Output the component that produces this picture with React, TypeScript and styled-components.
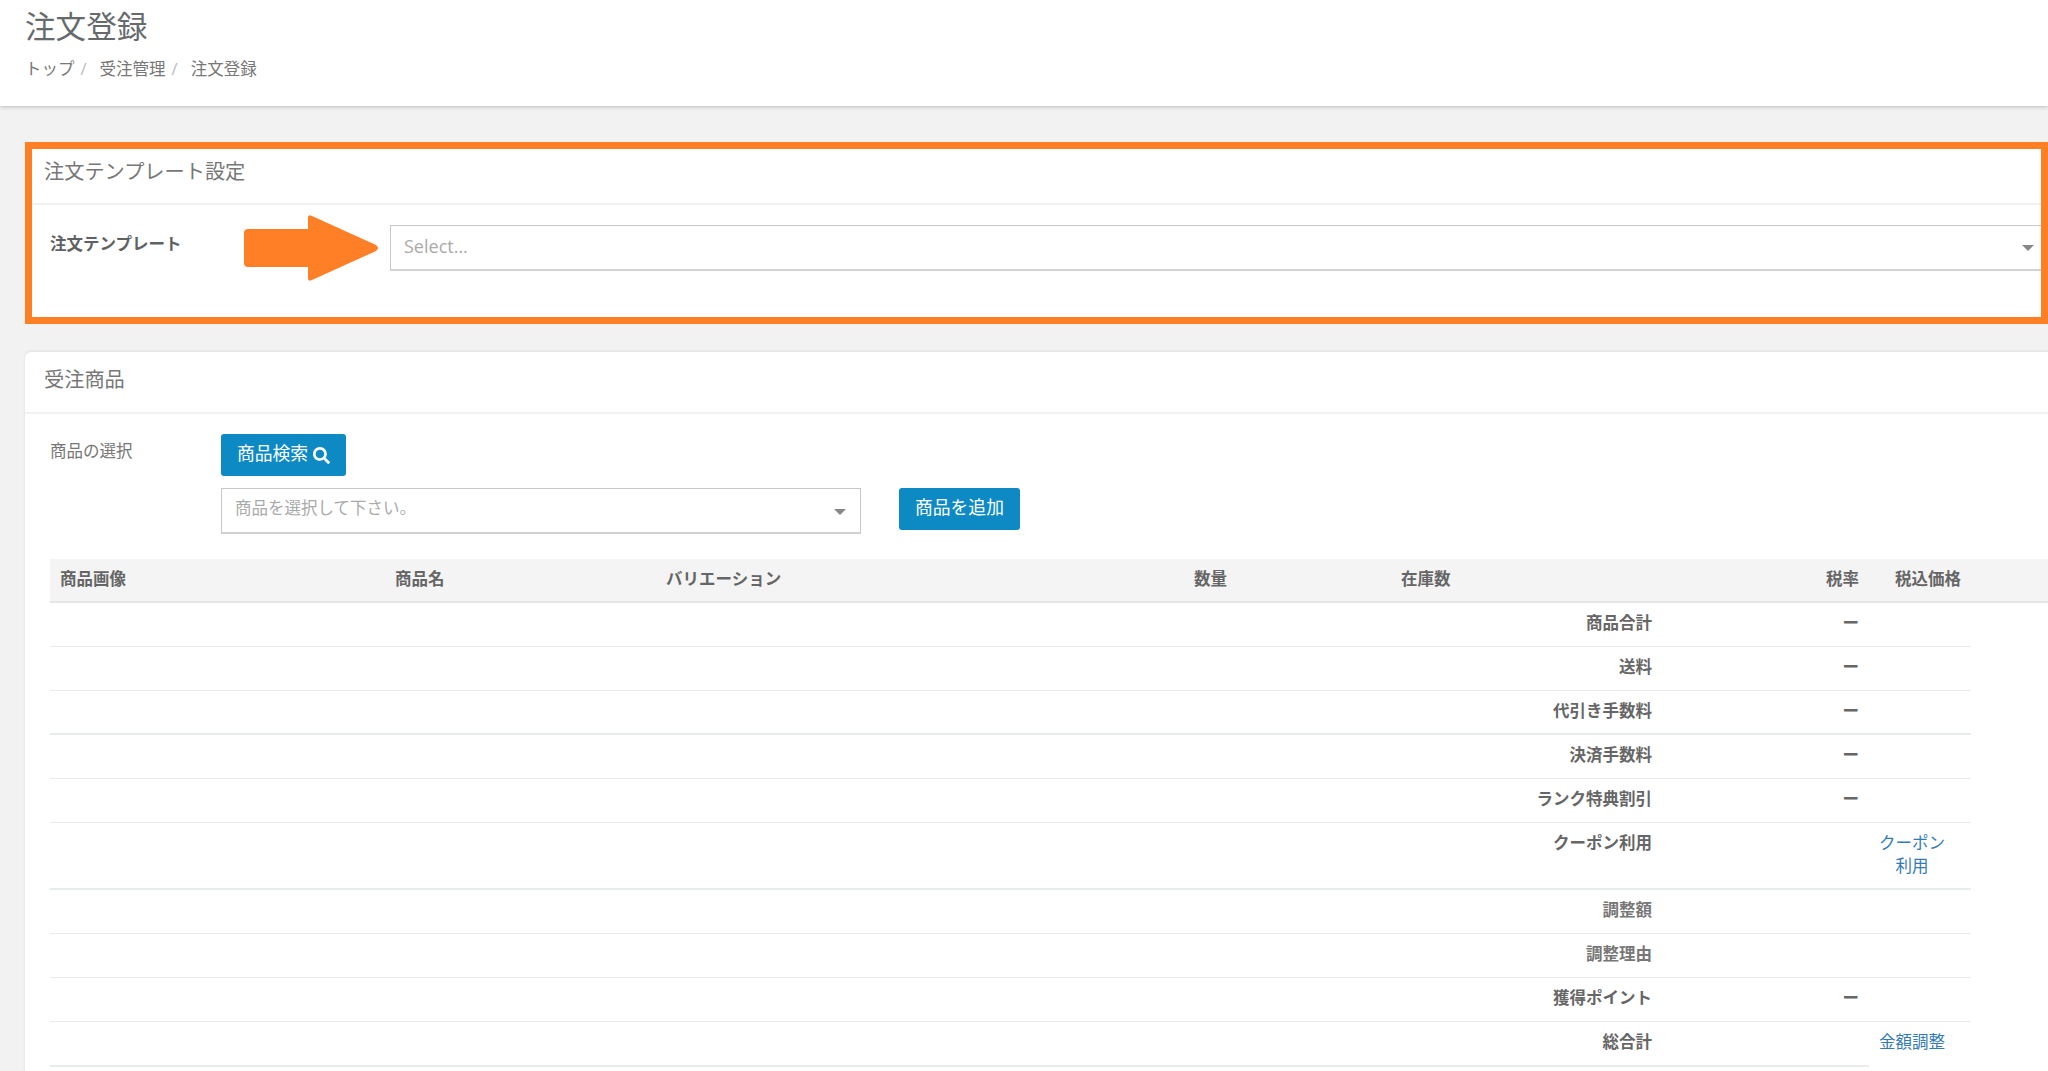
import React from "react";
import styled, { createGlobalStyle } from "styled-components";
import { FaSearch } from "react-icons/fa";

const Global = createGlobalStyle`
  html, body { margin: 0; padding: 0; height: 1071px; overflow: hidden; background: #f2f2f2; }
  body { font-family: "Open Sans", "Noto Sans CJK JP", sans-serif; font-size: 16.5px; line-height: 22.86px; color: #676a6c; }
  * { box-sizing: border-box; }
`;

const PageHeader = styled.header`
  height: 106px;
  background: #fff;
  padding: 8px 25px 0;
  box-shadow: 0 1px 4px rgba(0, 0, 0, 0.22);
`;
const Title = styled.h1`
  margin: 0;
  font-size: 30.6px;
  font-weight: 400;
  line-height: 36px;
  color: #676a6c;
`;
const Crumbs = styled.nav`
  display: flex;
  margin-top: 14px;
  color: #777;
`;
const Crumb = styled.span`
  &:not(:last-child)::after {
    content: "/";
    color: #bbb;
    padding: 0 13px 0 6px;
  }
`;
const Main = styled.main`
  display: flex;
  flex-direction: column;
  gap: 28px;
  padding: 36px 0 0 25px;
`;
const HighlightPanel = styled.section`
  position: relative;
  height: 182px;
  border: 7px solid #ff7f27;
  background: #fff;
  overflow: hidden;
`;
const Panel = styled.section`
  min-height: 760px;
  background: #fff;
  border-radius: 6px 0 0 0;
  box-shadow: 0 -1px 3px rgba(0, 0, 0, 0.08);
`;
const PanelTitle = styled.h2<{ $inset: number; $height: number; $lift: number }>`
  margin: 0;
  height: ${(p) => p.$height}px;
  display: flex;
  align-items: center;
  padding: 0 0 ${(p) => p.$lift}px ${(p) => p.$inset}px;
  font-size: 20.2px;
  font-weight: 400;
  color: #777;
  border-bottom: 2px solid #f2f2f2;
`;
const TemplateRow = styled.div`
  display: grid;
  grid-template-columns: 358px 1fr;
  align-items: start;
  padding-top: 20px;
`;
const TemplateLabel = styled.label`
  padding: 8px 0 0 18px;
  font-weight: 700;
  color: #5f6264;
`;
const Select = styled.div`
  position: relative;
  height: 46px;
  padding: 0 30px 2px 13px;
  display: flex;
  align-items: center;
  border: 1px solid #c8c8c8;
  border-bottom: 2px solid #d2d2d2;
  background: #fff;
  color: #aaa;
  &::after {
    content: "";
    position: absolute;
    right: 6px;
    top: 19px;
    border-style: solid;
    border-width: 6px 6px 0;
    border-color: #888 transparent transparent;
  }
`;
const TemplateSelect = styled(Select)`
  margin-right: -3px;
  font-size: 18px;
  &::after { right: 9px; }
`;
const ProductSelect = styled(Select)`
  width: 640px;
  padding-bottom: 4px;
  &::after { right: 14px; top: 20px; }
`;
const Arrow = styled.svg`
  position: absolute;
  left: 211px;
  top: 65px;
`;
const PanelBody = styled.div`
  padding: 20px 0 0 25px;
`;
const PickerGrid = styled.div`
  display: grid;
  grid-template-columns: 171px auto;
  justify-content: start;
  row-gap: 12px;
`;
const PickerLabel = styled.div`
  padding-top: 6px;
  color: #777;
`;
const PickerLine = styled.div`
  display: flex;
  align-items: flex-start;
  gap: 38px;
`;
const Button = styled.button`
  height: 42px;
  padding: 0 16px 3px;
  display: inline-flex;
  align-items: center;
  gap: 5px;
  border: 0;
  border-radius: 3px;
  background: #0d8ac4;
  color: #fff;
  font: inherit;
  font-size: 17.8px;
`;
const SearchGlyph = styled(FaSearch)`
  font-size: 17px;
  margin-top: 3px;
`;
const TableHead = styled.div`
  margin-top: 25px;
  height: 44px;
  display: grid;
  grid-template-columns: 335px 271px 528px 207px 425px 69px 1fr;
  align-items: center;
  padding: 0 0 2px 10px;
  background: #f4f4f4;
  border-bottom: 2px solid #e6e6e6;
  font-weight: 700;
  color: #666;
`;
const SummaryRow = styled.div<{ $tall?: boolean; $thick?: boolean; $short?: boolean }>`
  width: 1921px;
  height: ${(p) => (p.$tall ? 67 : 44)}px;
  display: grid;
  grid-template-columns: 1602px 207px 106px;
  padding-top: 9px;
  position: relative;
  border-bottom: ${(p) => (p.$thick ? 2 : 1)}px solid #e9ecec;
  ${(p) => p.$short && `height: 45px; border-bottom-color: transparent;
    &::after { content: ""; position: absolute; left: 0; bottom: -1px; width: 1819px; height: 2px; background: #e9ecec; }`}
`;
const SummaryLabel = styled.div<{ $soft?: boolean }>`
  text-align: right;
  font-weight: 700;
  color: ${(p) => (p.$soft ? "#777" : "#666")};
`;
const SummaryValue = styled.div`
  text-align: right;
  font-weight: 700;
  color: #666;
`;
const SummaryLink = styled.a`
  text-align: center;
  color: #337ab7;
  padding: 0 19px;
`;

const rows: { label: string; dash?: boolean; link?: string; tall?: boolean; thick?: boolean; soft?: boolean; short?: boolean }[] = [
  { label: "商品合計", dash: true },
  { label: "送料", dash: true },
  { label: "代引き手数料", dash: true, thick: true },
  { label: "決済手数料", dash: true },
  { label: "ランク特典割引", dash: true },
  { label: "クーポン利用", link: "クーポン利用", tall: true, thick: true },
  { label: "調整額", soft: true },
  { label: "調整理由", soft: true },
  { label: "獲得ポイント", dash: true },
  { label: "総合計", link: "金額調整", short: true },
];

export default function App() {
  return (
    <>
      <Global />
      <PageHeader>
        <Title>注文登録</Title>
        <Crumbs>
          <Crumb>トップ</Crumb>
          <Crumb>受注管理</Crumb>
          <Crumb>注文登録</Crumb>
        </Crumbs>
      </PageHeader>
      <Main>
        <HighlightPanel>
          <PanelTitle $inset={12} $height={56} $lift={10}>注文テンプレート設定</PanelTitle>
          <TemplateRow>
            <TemplateLabel>注文テンプレート</TemplateLabel>
            <TemplateSelect>Select...</TemplateSelect>
          </TemplateRow>
          <Arrow width="138" height="68" viewBox="0 0 138 68">
            <path
              d="M5 15H65V4Q65 0 69 2L133 31Q137 34 133 37L69 66Q65 68 65 64V53H5Q1 53 1 49V19Q1 15 5 15Z"
              fill="#ff7f27"
            />
          </Arrow>
        </HighlightPanel>
        <Panel>
          <PanelTitle $inset={19} $height={62} $lift={5}>受注商品</PanelTitle>
          <PanelBody>
            <PickerGrid>
              <PickerLabel>商品の選択</PickerLabel>
              <div>
                <Button>商品検索<SearchGlyph /></Button>
              </div>
              <div />
              <PickerLine>
                <ProductSelect>商品を選択して下さい。</ProductSelect>
                <Button>商品を追加</Button>
              </PickerLine>
            </PickerGrid>
            <TableHead>
              <span>商品画像</span>
              <span>商品名</span>
              <span>バリエーション</span>
              <span>数量</span>
              <span>在庫数</span>
              <span>税率</span>
              <span>税込価格</span>
            </TableHead>
            {rows.map((r) => (
              <SummaryRow key={r.label} $tall={r.tall} $thick={r.thick} $short={r.short}>
                <SummaryLabel $soft={r.soft}>{r.label}</SummaryLabel>
                <SummaryValue>{r.dash ? "ー" : ""}</SummaryValue>
                {r.link ? <SummaryLink>{r.link}</SummaryLink> : <span />}
              </SummaryRow>
            ))}
          </PanelBody>
        </Panel>
      </Main>
    </>
  );
}
